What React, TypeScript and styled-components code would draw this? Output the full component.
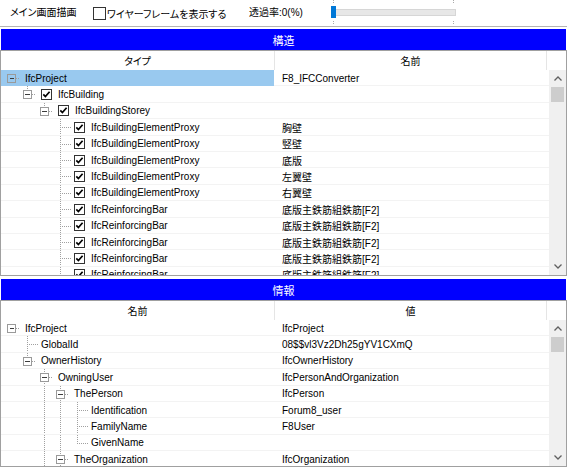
import React from 'react'
import styled, { createGlobalStyle } from 'styled-components'

const GlobalStyle = createGlobalStyle`
  *, *::before, *::after { box-sizing: border-box; }
  html, body { margin: 0; padding: 0; background: #fff; }
  body {
    font-family: "Liberation Sans", "Noto Sans CJK JP", sans-serif;
    font-size: 10px;
    color: #000;
    font-feature-settings: "palt";
  }
`

const ROW_H = 16.4
const colX = (k: number) => Math.round(10 + 16.4 * k) + 0.5
const LINE = '#a0a0a0'

const S = {
  Page: styled.div`
    width: 567px;
  `,

  Toolbar: styled.div`
    height: 27px;
    display: flex;
    align-items: center;
    padding-left: 10px;
    border-bottom: 1px solid #b4b4b4;
  `,

  ToolText: styled.div<{ $w: number }>`
    width: ${p => p.$w}px;
    white-space: nowrap;
    line-height: 14px;
  `,

  ToolCheck: styled.label<{ $w: number }>`
    width: ${p => p.$w}px;
    display: flex;
    align-items: center;
    gap: 1px;
    white-space: nowrap;
  `,

  Box: styled.span`
    width: 13px;
    height: 13px;
    border: 1px solid #333;
    background: #fff;
  `,

  Slider: styled.div`
    position: relative;
    width: 126px;
    height: 26px;
  `,

  SliderTrack: styled.div`
    position: absolute;
    left: 1px;
    top: 9px;
    width: 124px;
    height: 7px;
    background: #e7e7e7;
    border: 1px solid #d6d6d6;
  `,

  SliderThumb: styled.div`
    position: absolute;
    left: 0;
    top: 6px;
    width: 5px;
    height: 12px;
    background: #0078d7;
  `,

  SliderTicks: styled.svg`
    position: absolute;
    left: 0;
    top: 0;
  `,

  Section: styled.section<{ $gap: number }>`
    padding-top: ${p => p.$gap}px;
  `,

  TitleBar: styled.div`
    height: 21px;
    margin: 0 1px;
    background: #0000ff;
    color: #fff;
    font-size: 11px;
    display: flex;
    align-items: center;
    justify-content: center;
  `,

  Grid: styled.div`
    border: 1px solid #a0a0a0;
  `,

  Header: styled.div`
    display: flex;
    height: 19px;
  `,

  HeaderCell: styled.div<{ $w?: number }>`
    ${p => (p.$w ? `width: ${p.$w}px;` : 'flex: 1;')}
    border-right: 1px solid #e5e5e5;
    display: flex;
    align-items: center;
    justify-content: center;
  `,

  HeaderFiller: styled.div`
    flex: 1;
  `,

  Body: styled.div<{ $h: number }>`
    display: flex;
    height: ${p => p.$h}px;
    overflow: hidden;
  `,

  Rows: styled.div`
    flex: 1;
    overflow: hidden;
  `,

  Row: styled.div`
    display: flex;
    height: ${ROW_H}px;
    box-shadow: inset 0 -1px 0 #f3f3f3;
  `,

  NameCell: styled.div<{ $selected?: boolean }>`
    width: 273px;
    display: flex;
    align-items: center;
    white-space: nowrap;
    background: ${p => (p.$selected ? '#99c9ef' : 'transparent')};
  `,

  ValueCell: styled.div`
    flex: 1;
    display: flex;
    align-items: center;
    padding-left: 8px;
    white-space: nowrap;
  `,

  Check: styled.svg`
    flex: none;
    margin-right: 6px;
  `,

  Guides: styled.svg`
    flex: none;
  `,

  Scrollbar: styled.div`
    width: 17px;
    background: #f0f0f0;
    display: flex;
    flex-direction: column;
  `,

  ScrollButton: styled.div`
    height: 17px;
    display: flex;
    align-items: center;
    justify-content: center;
  `,

  Thumb: styled.div`
    height: 15px;
    margin: 0 2px;
    background: #cdcdcd;
  `,

  ScrollTrack: styled.div`
    flex: 1;
  `,
}

interface INode {
  name: string
  value: string
  depth: number
  exp?: boolean
  up?: boolean
  down?: boolean
  guides?: number[]
  check?: boolean
  selected?: boolean
}

const proxy = (value: string): INode => ({
  name: 'IfcBuildingElementProxy', value, depth: 3, up: true, down: true, check: true,
})
const rebar = (): INode => ({
  name: 'IfcReinforcingBar', value: '底版主鉄筋組鉄筋[F2]', depth: 3, up: true, down: true, check: true,
})

const structureRows: INode[] = [
  { name: 'IfcProject', value: 'F8_IFCConverter', depth: 0, exp: true, selected: true },
  { name: 'IfcBuilding', value: '', depth: 1, exp: true, up: true, check: true },
  { name: 'IfcBuildingStorey', value: '', depth: 2, exp: true, up: true, check: true },
  proxy('胸壁'),
  proxy('竪壁'),
  proxy('底版'),
  proxy('左翼壁'),
  proxy('右翼壁'),
  rebar(), rebar(), rebar(), rebar(), rebar(),
]

const infoRows: INode[] = [
  { name: 'IfcProject', value: 'IfcProject', depth: 0, exp: true },
  { name: 'GlobalId', value: '08$$vl3Vz2Dh25gYV1CXmQ', depth: 1, up: true, down: true },
  { name: 'OwnerHistory', value: 'IfcOwnerHistory', depth: 1, exp: true, up: true },
  { name: 'OwningUser', value: 'IfcPersonAndOrganization', depth: 2, exp: true, up: true, down: true },
  { name: 'ThePerson', value: 'IfcPerson', depth: 3, exp: true, up: true, down: true, guides: [2] },
  { name: 'Identification', value: 'Forum8_user', depth: 4, up: true, down: true, guides: [2, 3] },
  { name: 'FamilyName', value: 'F8User', depth: 4, up: true, down: true, guides: [2, 3] },
  { name: 'GivenName', value: '', depth: 4, up: true, guides: [2, 3] },
  { name: 'TheOrganization', value: 'IfcOrganization', depth: 3, exp: true, up: true, down: true, guides: [2] },
]

const TreeGuides = ({ node, width }: { node: INode; width: number }) => {
  const h = ROW_H
  const cy = 8.5
  const x = colX(node.depth)
  const dash = '1 1'
  return (
    <S.Guides width={width} height={h} viewBox={`0 0 ${width} ${h}`} shapeRendering="crispEdges">
      {(node.guides || []).map(k => (
        <line key={k} x1={colX(k)} y1={0} x2={colX(k)} y2={h} stroke={LINE} strokeDasharray={dash} />
      ))}
      {node.up && <line x1={x} y1={0} x2={x} y2={node.exp ? cy - 4 : cy} stroke={LINE} strokeDasharray={dash} />}
      {node.down && <line x1={x} y1={node.exp ? cy + 4 : cy} x2={x} y2={h} stroke={LINE} strokeDasharray={dash} />}
      {node.exp ? (
        <>
          <line x1={x + 5} y1={cy} x2={x + 9} y2={cy} stroke={LINE} strokeDasharray={dash} />
          <rect x={x - 4} y={cy - 4} width={8} height={8} fill="none" stroke="#9a9a9a" />
          <line x1={x - 2} y1={cy} x2={x + 3} y2={cy} stroke="#3c3c3c" />
        </>
      ) : (
        <line x1={x} y1={cy} x2={x + 11} y2={cy} stroke={LINE} strokeDasharray={dash} />
      )}
    </S.Guides>
  )
}

const CheckMark = () => (
  <S.Check width={11} height={11} viewBox="0 0 11 11">
    <rect x={0.5} y={0.5} width={10} height={10} fill="#fff" stroke="#333" />
    <path d="M2.3 5.4 L4.4 7.6 L8.6 2.8" fill="none" stroke="#000" strokeWidth={1.7} />
  </S.Check>
)

const Chevron = ({ dir }: { dir: 'up' | 'down' }) => (
  <svg width={8} height={5} viewBox="0 0 8 5">
    <polyline
      points={dir === 'up' ? '0.5,4.5 4,1 7.5,4.5' : '0.5,0.5 4,4 7.5,0.5'}
      fill="none"
      stroke="#606060"
      strokeWidth={1.3}
    />
  </svg>
)

const Scrollbar = () => (
  <S.Scrollbar>
    <S.ScrollButton><Chevron dir="up" /></S.ScrollButton>
    <S.Thumb />
    <S.ScrollTrack />
    <S.ScrollButton><Chevron dir="down" /></S.ScrollButton>
  </S.Scrollbar>
)

interface IPanelProps {
  title: string
  columns: [string, string]
  rows: INode[]
  bodyHeight: number
  gap: number
}

const Panel = ({ title, columns, rows, bodyHeight, gap }: IPanelProps) => (
  <S.Section $gap={gap}>
    <S.TitleBar>{title}</S.TitleBar>
    <S.Grid>
      <S.Header>
        <S.HeaderCell $w={274}>{columns[0]}</S.HeaderCell>
        <S.HeaderCell $w={272}>{columns[1]}</S.HeaderCell>
        <S.HeaderFiller />
      </S.Header>
      <S.Body $h={bodyHeight}>
        <S.Rows>
          {rows.map((node, i) => (
            <S.Row key={i}>
              <S.NameCell $selected={node.selected}>
                <TreeGuides node={node} width={Math.floor(colX(node.depth)) + 14} />
                {node.check && <CheckMark />}
                {node.name}
              </S.NameCell>
              <S.ValueCell>{node.value}</S.ValueCell>
            </S.Row>
          ))}
        </S.Rows>
        <Scrollbar />
      </S.Body>
    </S.Grid>
  </S.Section>
)

const TransparencySlider = () => (
  <S.Slider>
    <S.SliderTicks width={126} height={26} viewBox="0 0 126 26" shapeRendering="crispEdges">
      {[2.5, 122.5].map(x => (
        <g key={x}>
          <line x1={x} y1={0} x2={x} y2={4} stroke="#aaa" strokeDasharray="1 1" />
          <line x1={x} y1={21} x2={x} y2={25} stroke="#aaa" strokeDasharray="1 1" />
        </g>
      ))}
    </S.SliderTicks>
    <S.SliderTrack />
    <S.SliderThumb />
  </S.Slider>
)

const App = () => (
  <S.Page>
    <GlobalStyle />
    <S.Toolbar>
      <S.ToolText $w={83}>メイン画面描画</S.ToolText>
      <S.ToolCheck $w={156}>
        <S.Box />
        <span>ワイヤーフレームを表示する</span>
      </S.ToolCheck>
      <S.ToolText $w={82}>透過率:0(%)</S.ToolText>
      <TransparencySlider />
    </S.Toolbar>
    <Panel title="構造" columns={['タイプ', '名前']} rows={structureRows} bodyHeight={205} gap={2} />
    <Panel title="情報" columns={['名前', '値']} rows={infoRows} bodyHeight={146} gap={3} />
  </S.Page>
)

export default App
